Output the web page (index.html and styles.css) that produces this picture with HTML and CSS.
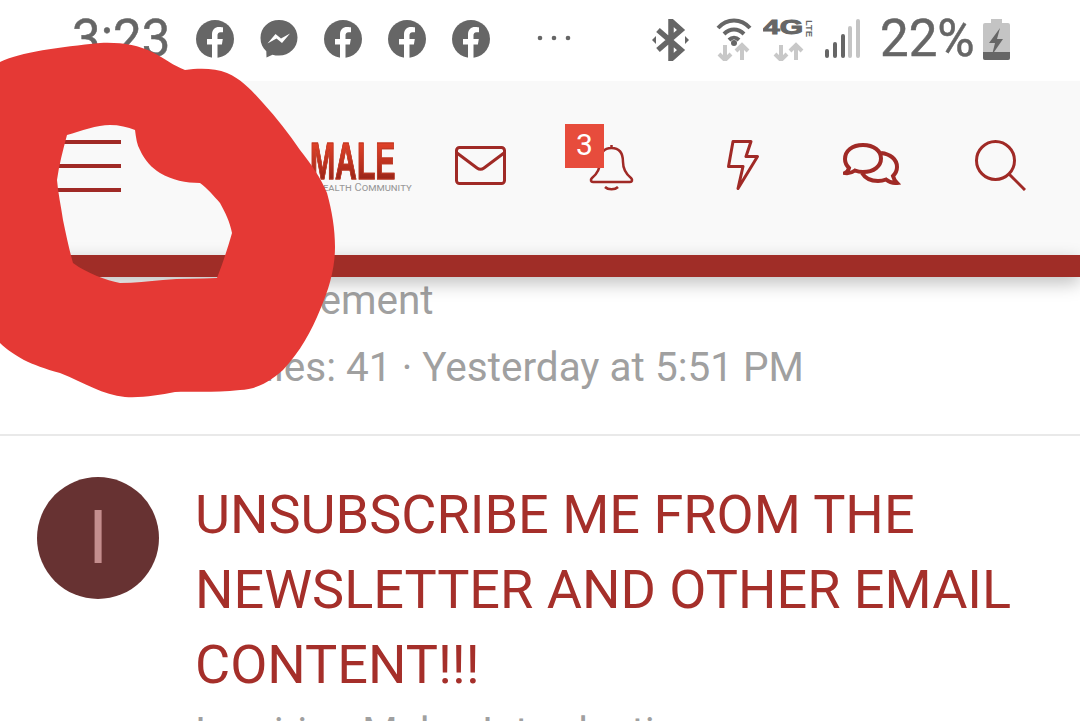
FILE: index.html
```html
<!DOCTYPE html>
<html lang="en">
<head>
<meta charset="utf-8">
<title>Forum</title>
<link rel="stylesheet" href="styles.css">
</head>
<body>
<svg class="defs" aria-hidden="true"><defs>
  <symbol id="fb" viewBox="0 0 38 38">
    <circle class="g" cx="19" cy="19" r="19"/>
    <path class="w" d="M16 38V24.500h-5V19h5v-4.500c0-5 3-7.500 7-7.500 2 0 4 .4 4 .4v4.800h-2.400c-2.400 0-3.100 1.500-3.100 3V19h5.300l-.9 5.500H21.500V38z"/>
  </symbol>
</defs></svg>
<div class="page">
  <div class="status">
    <span class="time">3:23</span>
    <svg class="si" viewBox="0 0 38 38"><use href="#fb"/></svg>
    <svg class="si" viewBox="0 0 38 38"><path class="g" d="M19 0C8.500 0 .5 7.700.5 18c0 5.400 2.200 10 5.800 13.200l.2 6.300 6-2.800c2 .6 4.200.9 6.500.9 10.500 0 18.500-7.700 18.500-18S29.500 0 19 0z"/><path class="w" d="M7.500 23.500l8-9.500 5.500 4.500 9-5-8 9.500-5.500-4.500z"/></svg>
    <svg class="si" viewBox="0 0 38 38"><use href="#fb"/></svg>
    <svg class="si" viewBox="0 0 38 38"><use href="#fb"/></svg>
    <svg class="si" viewBox="0 0 38 38"><use href="#fb"/></svg>
    <svg class="dots" viewBox="0 0 40 6"><circle class="g" cx="3" cy="3" r="2.300"/><circle class="g" cx="17" cy="3" r="2.300"/><circle class="g" cx="31" cy="3" r="2.300"/></svg>
    <svg class="bt" viewBox="0 0 37 42"><path class="gs" d="M6 11l23 20-10 9V2l10 9L6 31" stroke-width="5.500"/><path class="g" d="M0 21l4-4v8zM37 21l-4-4v8z"/></svg>
    <svg class="wifi" viewBox="0 0 36 46"><path class="gs" d="M2 13C11 3 25 3 34 13M8 19c6-6 14-6 20 0M13 25c3-3 7-3 10 0" stroke-width="4"/><circle class="g" cx="18" cy="28" r="3"/><path class="ls" d="M9 30v15M3 39l6 6 6-6M26 45V30M20 36l6-6 6 6" stroke-width="4"/></svg>
    <svg class="net" viewBox="0 0 52 46"><text class="tg" x="0" y="19" textLength="40" lengthAdjust="spacingAndGlyphs">4G</text><text class="lte" transform="translate(43 5) rotate(90)" textLength="17" lengthAdjust="spacingAndGlyphs">LTE</text><path class="ls" d="M18 30v15M12 39l6 6 6-6M33 45V30M27 36l6-6 6 6" stroke-width="4"/></svg>
    <svg class="sig" viewBox="0 0 36 40"><rect class="g" x="0" y="30" width="4" height="9" rx="2"/><rect class="g" x="8" y="23" width="4" height="16" rx="2"/><rect class="g" x="16" y="15" width="4" height="24" rx="2"/><rect class="l" x="23" y="7" width="4" height="32" rx="2"/><rect class="l" x="31" y="0" width="4" height="39" rx="2"/></svg>
    <span class="pct">22%</span>
    <svg class="bat" viewBox="0 0 27 42"><path class="l" d="M8 1h11v4h6a2 2 0 0 1 2 2v33a2 2 0 0 1-2 2H2a2 2 0 0 1-2-2V7a2 2 0 0 1 2-2h6z"/><path class="g" d="M0 34h27v6a2 2 0 0 1-2 2H2a2 2 0 0 1-2-2z"/><path class="g" d="M17 10L6 25h6l-3 12 11-16h-6l3-11z"/></svg>
  </div>

  <header class="bar">
    <div class="burger"><i></i><i></i><i></i></div>
    <div class="logo">
      <span class="logo-main">MALE</span>
      <span class="logo-sub">ealth Community</span>
    </div>
    <svg class="ic mail" viewBox="0 0 51 39"><rect x="1.500" y="1.500" width="48" height="36" rx="3"/><path d="M2 7l20 15c2 1.500 5 1.500 7 0L49 7"/></svg>
    <div class="bell-wrap">
      <svg class="ic bell" viewBox="0 0 45 50"><path d="M22.500 4v3M22.500 7C31 7 34 13 34 21c0 8 3 12 8 16 2 2 1 4-1 4H4c-2 0-3-2-1-4 5-4 8-8 8-16 0-8 3-14 11.500-14zM16 46c3 3 10 3 13 0"/></svg>
      <span class="badge">3</span>
    </div>
    <svg class="ic bolt" viewBox="0 0 32 50"><path d="M6 1.500h18l-5 15h11.500L11 48.500l5-22H1.500z" stroke-linejoin="round"/></svg>
    <svg class="ic chat" viewBox="0 0 58 45"><path d="M20 3C9 3 2 9 2 17c0 4 2 7 4 9-.5 2-2 4-4 5 4 .5 8-1 10-2.500 2.500 1 5 1.500 8 1.500 11 0 18-6 18-13.500S31 3 20 3z"/><path d="M38 11c9 1 16 6 16 14 0 4-2 7-4 9 .5 2 2 5 4 7-4 .5-8-1-11-3.500-2.500 1-5 1.500-8 1.500-8 0-13-3-16-8"/></svg>
    <svg class="ic search" viewBox="0 0 51 51"><circle cx="20.500" cy="20.500" r="19"/><path d="M34 34l16 16"/></svg>
  </header>
  <div class="stripe"></div>

  <main class="list">
    <section class="row first">
      <div class="spacer"></div>
      <div class="body">
        <p class="sub">Management</p>
        <p class="sub meta">Replies: 41 · Yesterday at 5:51 PM</p>
      </div>
    </section>
    <section class="row second">
      <div class="avatar">I</div>
      <div class="body">
        <h2 class="title">UNSUBSCRIBE ME FROM THE NEWSLETTER AND OTHER EMAIL CONTENT!!!</h2>
        <p class="sub forum">Inquiring Males Introductions</p>
      </div>
    </section>
  </main>

  <svg class="scribble" viewBox="0 0 340 400" preserveAspectRatio="none">
    <path fill-rule="evenodd" d="M0 62C20 52 60 47 100 43c20-1 38 2 52 9 12 6 22 14 33 18 14-2 30-2 42 3 16 7 26 19 36 30 14 15 26 31 37 47 11 14 21 28 27 43 5 18 8 36 8 54 0 22-6 42-15 63-8 20-20 42-37 60-14 13-30 20-43 20-28 3-50 1-65 2-16 3-32 6-50 5-22-2-40-14-65-24C30 365 14 356 0 343zM67 135c14-4 30-10 43-10 9 0 18 2 25 5 1 8 2 15 5 20 5 11 12 18 20 23 12 7 26 10 40 10 7 5 14 13 20 20 5 9 10 19 12 30-4 14-9 30-15 45-18 1-36 0-54 2-15 1-28 3-43 3-14-3-32-9-47-20-4-14-7-29-10-43-2-14-5-27-6-40 2-15 6-30 10-45z"/>
  </svg>
</div>
</body>
</html>
```

FILE: styles.css
```css
* { box-sizing: border-box; }
html, body { margin: 0; padding: 0; background: #fff; }
.defs { position: absolute; width: 0; height: 0; }
.page {
  position: relative;
  width: 1080px;
  height: 721px;
  overflow: hidden;
  font-family: Roboto, "Liberation Sans", sans-serif;
}
p, h2 { margin: 0; font-weight: 400; }

/* status bar */
.status {
  height: 81px;
  display: flex;
  align-items: flex-start;
  padding-left: 72px;
  background: #fff;
  color: #666;
}
.time, .pct { font-size: 51px; line-height: 78px; flex: none; -webkit-text-stroke: .5px #666; }
.time { width: 124px; }
.si { width: 38px; height: 38px; margin: 20px 26px 0 0; flex: none; }
.si:nth-of-type(5) { margin-right: 0; }
.g { fill: #666; }
.l { fill: #c4c4c4; }
.w { fill: #fff; }
.gs { fill: none; stroke: #666; }
.ls { fill: none; stroke: #c8c8c8; }
.tg { fill: #666; stroke: #666; stroke-width: 1px; font-family: "Liberation Sans", sans-serif; font-weight: 700; font-size: 21px; }
.lte { fill: #666; font-family: "Liberation Sans", sans-serif; font-weight: 700; font-size: 9px; }
.dots { width: 40px; height: 6px; margin: 35px 0 0 47px; flex: none; }
.bt { width: 37px; height: 42px; margin: 19px 0 0 75px; flex: none; }
.wifi { width: 36px; height: 46px; margin: 15px 0 0 27px; flex: none; }
.net { width: 52px; height: 46px; margin: 15px 0 0 11px; flex: none; }
.sig { width: 36px; height: 40px; margin: 19px 0 0 10px; flex: none; }
.pct { margin-left: 19px; width: 103px; }
.bat { width: 27px; height: 42px; margin: 18px 0 0 0; flex: none; }

/* header */
.bar {
  height: 174px;
  background: #f9f9f9;
  display: flex;
  align-items: flex-start;
  padding-left: 57px;
}
.burger { width: 64px; margin-top: 59px; display: flex; flex-direction: column; gap: 20px; flex: none; }
.burger i { display: block; height: 4px; background: #a02a26; }
.logo { width: 100px; margin: 58px 0 0 189px; flex: none; }
.logo-main {
  display: block;
  width: 147px;
  white-space: nowrap;
  font-family: "Liberation Sans", sans-serif;
  font-weight: 700;
  font-size: 52px;
  line-height: 44px;
  transform: scaleX(.58);
  transform-origin: left center;
  background: linear-gradient(#e8452a, #b8301e 60%, #8f2218);
  -webkit-background-clip: text;
  background-clip: text;
  color: transparent;
  -webkit-text-stroke: 1px #bb3520;
}
.logo-sub {
  display: block;
  font-size: 11px;
  line-height: 9px;
  margin-left: 13px;
  color: #9a9a9a;
  font-variant: small-caps;
  white-space: nowrap;
}
.ic { fill: none; stroke: #a02a26; stroke-width: 3.500; flex: none; }
.mail { width: 51px; height: 39px; margin: 65px 0 0 45px; stroke-width: 3; }
.bell-wrap { position: relative; width: 45px; height: 50px; margin: 60px 0 0 83px; flex: none; }
.bell { width: 45px; height: 50px; display: block; stroke-width: 2.500; }
.badge {
  position: absolute;
  left: -24px;
  top: -17px;
  width: 39px;
  height: 44px;
  background: #e74c3c;
  color: #fff;
  font-size: 30px;
  line-height: 42px;
  text-align: center;
}
.bolt { width: 32px; height: 50px; margin: 59px 0 0 93px; stroke-width: 3; }
.chat { width: 58px; height: 45px; margin: 61px 0 0 84px; stroke-width: 4; }
.search { width: 51px; height: 51px; margin: 59px 0 0 74px; stroke-width: 3; }

.stripe {
  height: 22px;
  background: #a02d27;
  box-shadow: 0 6px 18px rgba(0, 0, 0, .26);
  position: relative;
}

/* list */
.row { display: flex; padding-left: 37px; }
.first { height: 159px; border-bottom: 2px solid #e9e9e9; }
.spacer { width: 122px; flex: none; }
.body { margin-left: 36px; min-width: 0; flex: 1; }
.sub { color: #a0a0a0; font-size: 40.500px; line-height: 46px; white-space: nowrap; }
.meta { margin-top: 21px; }
.forum { margin-top: 7px; }
.second { padding-top: 41px; }
.avatar {
  width: 122px;
  height: 122px;
  border-radius: 50%;
  background: #673232;
  color: #c48e8e;
  font-size: 74px;
  line-height: 122px;
  text-align: center;
  flex: none;
}
.title {
  color: #a52f2a;
  font-size: 54px;
  line-height: 75px;
  width: 840px;
}

/* hand-drawn scribble over the page */
.scribble {
  position: absolute;
  left: 0;
  top: 0;
  width: 340px;
  height: 400px;
  fill: #e53935;
  filter: blur(.5px);
  pointer-events: none;
}
```
